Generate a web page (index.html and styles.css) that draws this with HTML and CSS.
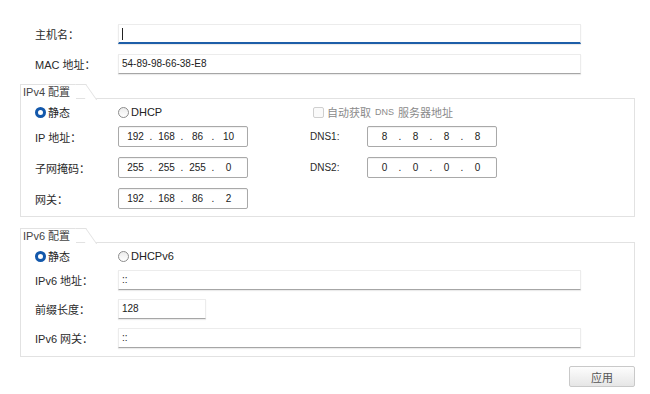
FILE: index.html
```html
<!DOCTYPE html>
<html lang="zh-CN">
<head>
<meta charset="UTF-8">
<title>网络设置</title>
<link rel="stylesheet" href="styles.css">
</head>
<body>

<div class="page">
  <div class="row">
    <span class="lbl">主机名：</span>
    <div class="field long focus"><span class="caret"></span></div>
  </div>
  <div class="row">
    <span class="lbl">MAC 地址：</span>
    <div class="field long">54-89-98-66-38-E8</div>
  </div>

  <!-- IPv4 -->
  <div class="group">
    <div class="tab">IPv4 配置</div>
    <div class="box">
      <div class="opts">
        <span class="opt w1"><i class="radio on"></i>静态</span>
        <span class="opt w2"><i class="radio"></i>DHCP</span>
        <span class="opt off"><i class="check"></i>自动获取 <span class="sm">DNS</span> 服务器地址</span>
      </div>
      <div class="grid4">
        <span class="lbl">IP 地址：</span>
        <div class="cell"><div class="ip"><span>192</span><b>.</b><span>168</span><b>.</b><span>86</span><b>.</b><span>10</span></div></div>
        <span class="lbl en">DNS1:</span>
        <div class="ip"><span>8</span><b>.</b><span>8</span><b>.</b><span>8</span><b>.</b><span>8</span></div>

        <span class="lbl">子网掩码：</span>
        <div class="cell"><div class="ip"><span>255</span><b>.</b><span>255</span><b>.</b><span>255</span><b>.</b><span>0</span></div></div>
        <span class="lbl en">DNS2:</span>
        <div class="ip"><span>0</span><b>.</b><span>0</span><b>.</b><span>0</span><b>.</b><span>0</span></div>

        <span class="lbl">网关：</span>
        <div class="cell"><div class="ip"><span>192</span><b>.</b><span>168</span><b>.</b><span>86</span><b>.</b><span>2</span></div></div>
      </div>
    </div>
  </div>

  <!-- IPv6 -->
  <div class="group">
    <div class="tab">IPv6 配置</div>
    <div class="box v6">
      <div class="opts">
        <span class="opt w1"><i class="radio on"></i>静态</span>
        <span class="opt"><i class="radio"></i>DHCPv6</span>
      </div>
      <div class="row">
        <span class="lbl">IPv6 地址：</span>
        <div class="field long">::</div>
      </div>
      <div class="row">
        <span class="lbl">前缀长度：</span>
        <div class="field short">128</div>
      </div>
      <div class="row">
        <span class="lbl">IPv6 网关：</span>
        <div class="field long">::</div>
      </div>
    </div>
  </div>

  <div class="actions">
    <button class="btn">应用</button>
  </div>
</div>

</body>
</html>
```

FILE: styles.css
```css
/* Global */
body {
  margin: 0;
  background: #fff;
  color: #333;
  font-family: "Liberation Sans", "Noto Sans CJK SC", sans-serif;
  font-size: 11px;
}

.page {
  width: 615px;
  padding: 24px 0 0 20px;
}

.row {
  display: flex;
  align-items: center;
  height: 20px;
  margin: 0 0 10px 15px;
}

.lbl {
  width: 83px;
  flex-shrink: 0;
  color: #2a2a2a;
}

.lbl.en {
  font-size: 10px;
}

/* text fields */
.field {
  box-sizing: border-box;
  height: 20px;
  line-height: 18px;
  padding: 0 3px;
  border: 1px solid #ececec;
  border-bottom-color: #a6a6a6;
  box-shadow: 0 1px 1px rgba(0, 0, 0, 0.08);
  color: #222;
  font-size: 10px;
}

.long {
  width: 463px;
}

.short {
  width: 88px;
}

.focus {
  border-bottom: 2px solid #1d5ea8;
}

.caret {
  display: inline-block;
  width: 1px;
  height: 12px;
  margin-top: 3px;
  background: #222;
  vertical-align: top;
}

/* group boxes */
.group {
  margin-bottom: 11px;
}

.tab {
  position: relative;
  z-index: 1;
  display: inline-block;
  height: 14px;
  line-height: 14px;
  padding: 0 6px 0 2px;
  border: 1px solid #e2e2e2;
  border-right: none;
  border-bottom: none;
  background: #fff;
  color: #444;
  margin-bottom: -1px;
}

.tab::after {
  content: '';
  position: absolute;
  top: -1px;
  right: -10px;
  width: 10px;
  height: 15px;
  border-top: 1px solid #e2e2e2;
  border-right: 1px solid #e2e2e2;
  background: #fff;
  transform: skewX(35deg);
  transform-origin: top left;
}

.box {
  box-sizing: border-box;
  width: 615px;
  height: 119px;
  padding: 6px 0 0 14px;
  border: 1px solid #e2e2e2;
}

.box.v6 {
  height: 115px;
}

.box .row {
  margin: 0 0 9px 0;
}

.opts {
  display: flex;
  align-items: center;
  height: 14px;
  margin-bottom: 7px;
}

.opt {
  display: flex;
  align-items: center;
  gap: 2px;
  color: #222;
}

.w1 {
  width: 83px;
}

.w2 {
  width: 195px;
}

.opt.off {
  color: #8a8a8a;
}

.sm {
  font-size: 9px;
  margin: 0 2px;
}

.radio {
  box-sizing: border-box;
  width: 11px;
  height: 11px;
  border-radius: 50%;
  border: 1px solid #8c8c8c;
  background: linear-gradient(#ececec, #fff);
}

.radio.on {
  border: 3px solid #1358ab;
  background: #fff;
}

.check {
  box-sizing: border-box;
  width: 11px;
  height: 11px;
  border: 1px solid #cfcfcf;
  border-radius: 2px;
  background: #fafafa;
  margin-right: 1px;
}

/* ipv4 grid */
.grid4 {
  display: grid;
  grid-template-columns: 83px 192px 57px 130px;
  grid-auto-rows: 21px;
  row-gap: 10px;
  align-items: center;
}

.ip {
  box-sizing: border-box;
  width: 130px;
  height: 21px;
  display: flex;
  align-items: center;
  padding-left: 5px;
  border: 1px solid #a9a9a9;
  border-radius: 2px;
  box-shadow: inset 0 1px 1px rgba(0, 0, 0, 0.06);
  color: #222;
  font-size: 10px;
}

.ip span {
  width: 23px;
  text-align: center;
}

.ip b {
  width: 8px;
  font-weight: normal;
  text-align: center;
}

/* footer */
.actions {
  display: flex;
  justify-content: flex-end;
  margin-top: -2px;
}

.btn {
  width: 66px;
  height: 21px;
  border: 1px solid #c9c9c9;
  border-radius: 2px;
  background: linear-gradient(#fdfdfd, #e6e6e6);
  color: #555;
  font-family: inherit;
  font-size: 11px;
  padding: 0;
}
```
